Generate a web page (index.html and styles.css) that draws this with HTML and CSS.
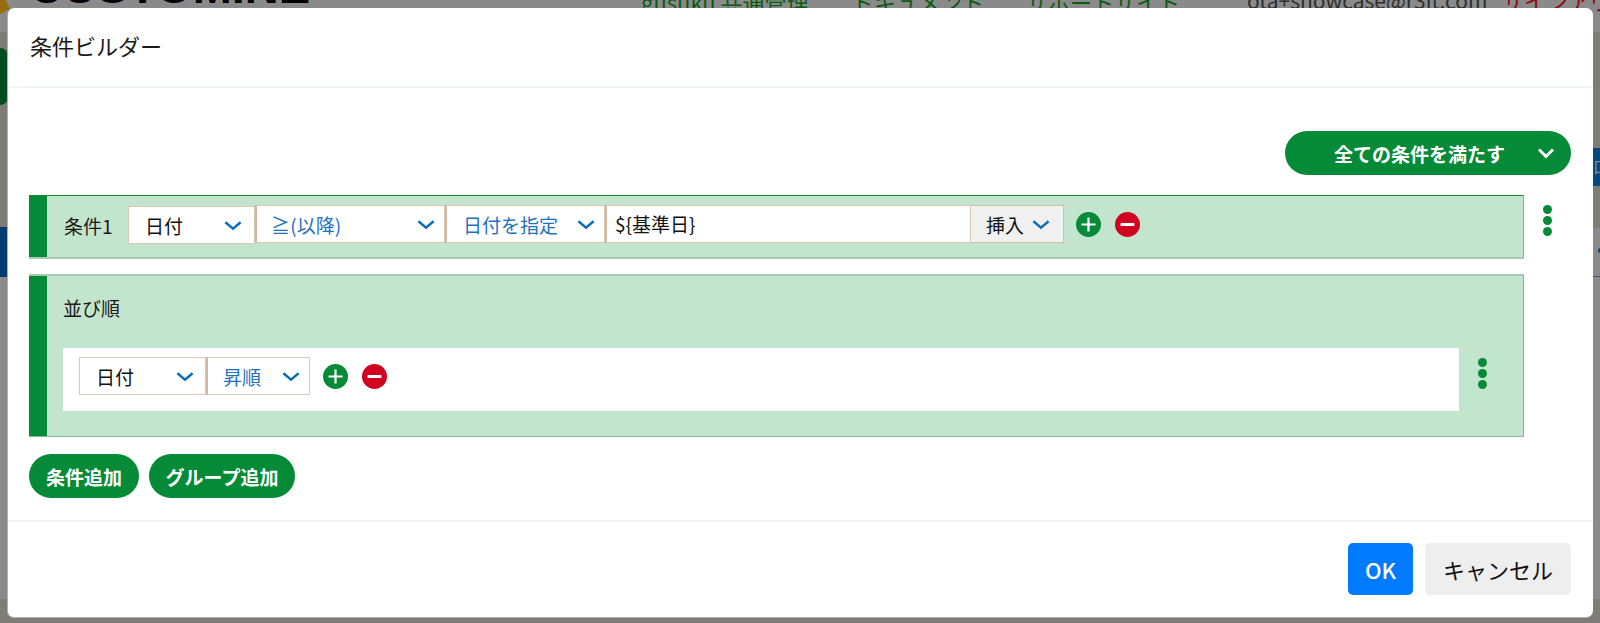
FILE: index.html
```html
<!DOCTYPE html>
<html lang="ja">
<head>
    <meta charset="UTF-8">
    <meta name="viewport" content="width=device-width, initial-scale=1.0">
    <title>条件ビルダー</title>
    <link rel="stylesheet" href="styles.css">
</head>
<body>
    <!-- page behind the dialog, already dimmed -->
    <div class="behind">
        <div class="band band-top"></div>
        <div class="band band-bottom"></div>
        <div class="logo-mark"></div>
        <div class="side-green"></div>
        <div class="side-blue"></div>
        <div class="side-badge">口</div>
        <div class="side-dot"></div>
        <div class="side-line"></div>
        <div class="brand">CUSTOMINE</div>
        <div class="nav">
            <span class="nav-link nav-gusuku">gusuku 共通管理</span>
            <span class="nav-link nav-docs">ドキュメント</span>
            <span class="nav-link nav-support">サポートサイト</span>
            <span class="nav-user">ota+showcase@r3it.com</span>
            <span class="nav-out">サインアウト</span>
        </div>
    </div>

    <div class="modal">
        <div class="modal-header">条件ビルダー</div>

        <div class="modal-body">
            <div class="match-row">
                <div class="match-pill">
                    <span>全ての条件を満たす</span>
                    <svg class="chev-white" viewBox="0 0 18 12"><path d="M2 2.5 9 9.5 16 2.5"/></svg>
                </div>
            </div>

            <div class="cond-line">
                <div class="cond-box cond-single">
                    <span class="cond-label">条件1</span>
                    <div class="sel sel-field sel-first">
                        <span class="sel-text-black">日付</span>
                        <svg class="chev" viewBox="0 0 18 12"><path d="M2 3 9 9 16 3"/></svg>
                    </div>
                    <div class="sel sel-op">
                        <span>≧ (以降)</span>
                        <svg class="chev" viewBox="0 0 18 12"><path d="M2 3 9 9 16 3"/></svg>
                    </div>
                    <div class="sel sel-kind">
                        <span>日付を指定</span>
                        <svg class="chev" viewBox="0 0 18 12"><path d="M2 3 9 9 16 3"/></svg>
                    </div>
                    <div class="value-input">${基準日}</div>
                    <div class="insert-btn">
                        <span>挿入</span>
                        <svg class="chev" viewBox="0 0 18 12"><path d="M2 3 9 9 16 3"/></svg>
                    </div>
                    <svg class="round-btn round-first" viewBox="0 0 25 25"><circle class="fill-green" cx="12.5" cy="12.5" r="12.5"/><path class="mark" d="M5.5 11.4h5.9V5.5h2.2v5.9h5.9v2.2h-5.9v5.9h-2.2v-5.9H5.5z"/></svg>
                    <svg class="round-btn" viewBox="0 0 25 25"><circle class="fill-red" cx="12.5" cy="12.5" r="12.5"/><rect class="mark" x="5.5" y="10.9" width="14" height="3.2" rx="1"/></svg>
                </div>
                <div class="dots dots-outer"><i></i><i></i><i></i></div>
            </div>

            <div class="cond-line">
                <div class="cond-box cond-sort">
                    <div class="sort-title">並び順</div>
                    <div class="sort-line">
                        <div class="sort-panel">
                            <div class="sel sel-sort-field">
                                <span class="sel-text-black">日付</span>
                                <svg class="chev" viewBox="0 0 18 12"><path d="M2 3 9 9 16 3"/></svg>
                            </div>
                            <div class="sel sel-sort-dir">
                                <span>昇順</span>
                                <svg class="chev" viewBox="0 0 18 12"><path d="M2 3 9 9 16 3"/></svg>
                            </div>
                            <svg class="round-btn round-first" viewBox="0 0 25 25"><circle class="fill-green" cx="12.5" cy="12.5" r="12.5"/><path class="mark" d="M5.5 11.4h5.9V5.5h2.2v5.9h5.9v2.2h-5.9v5.9h-2.2v-5.9H5.5z"/></svg>
                            <svg class="round-btn" viewBox="0 0 25 25"><circle class="fill-red" cx="12.5" cy="12.5" r="12.5"/><rect class="mark" x="5.5" y="10.9" width="14" height="3.2" rx="1"/></svg>
                        </div>
                        <div class="dots dots-inner"><i></i><i></i><i></i></div>
                    </div>
                </div>
            </div>

            <div class="add-row">
                <button class="add-btn add-cond">条件追加</button>
                <button class="add-btn add-group">グループ追加</button>
            </div>
        </div>

        <div class="modal-footer">
            <button class="btn-ok">OK</button>
            <button class="btn-cancel">キャンセル</button>
        </div>
    </div>
</body>
</html>
```

FILE: styles.css
```css
html, body {
    margin: 0;
    padding: 0;
    height: 100%;
    overflow: hidden;
    background-color: #8a8a8a;
    font-family: "Noto Sans CJK JP", "Noto Sans", sans-serif;
    color: #1a1a1a;
}
.behind {
    position: absolute;
    inset: 0;
    overflow: hidden;
}
.band {
    position: absolute;
    left: 0;
    right: 0;
    background-color: #7f7c76;
}
.band-top {
    top: 32px;
    height: 196px;
}
.band-bottom {
    top: 599px;
    bottom: 0;
}
.logo-mark {
    position: absolute;
    left: -6px;
    top: -4px;
    width: 13px;
    height: 17px;
    background-color: #96700f;
    transform: rotate(-30deg);
}
.side-green {
    position: absolute;
    left: -10px;
    top: 48px;
    width: 18px;
    height: 57px;
    border-radius: 8px;
    background-color: #004d1e;
}
.side-blue {
    position: absolute;
    left: 0;
    top: 227px;
    width: 8px;
    height: 50px;
    background-color: #003b70;
}
.side-badge {
    position: absolute;
    left: 1590px;
    top: 148px;
    width: 30px;
    height: 38px;
    line-height: 36px;
    font-size: 16px;
    padding-left: 3px;
    box-sizing: border-box;
    color: #8a8a8a;
    background-color: #004a80;
}
.side-dot {
    position: absolute;
    left: 1598px;
    top: 248px;
    width: 5px;
    height: 5px;
    border-radius: 50%;
    background-color: #004a80;
}
.side-line {
    position: absolute;
    left: 1590px;
    right: 0;
    top: 276px;
    height: 1px;
    background-color: #2c5a90;
}
.brand {
    position: absolute;
    left: 29px;
    top: -37px;
    font-family: "Liberation Sans", sans-serif;
    font-size: 47px;
    line-height: 47px;
    font-weight: 700;
    color: #000;
}
.nav {
    font-size: 22px;
    line-height: 22px;
}
.nav span {
    position: absolute;
    top: -11px;
    white-space: nowrap;
}
.nav span.nav-link {
    top: -10px;
    color: #0b5a12;
}
.nav-gusuku { left: 641px; }
.nav-docs { left: 852px; }
.nav-support { left: 1026px; }
.nav-user {
    left: 1247px;
    color: #2e2e2e;
    font-size: 21px;
}
.nav-out {
    left: 1502px;
    color: #8c0a0a;
}

.modal {
    position: absolute;
    left: 7px;
    top: 8px;
    width: 1586px;
    height: 610px;
    box-sizing: border-box;
    display: flex;
    flex-direction: column;
    background-color: #ffffff;
    border-left: 1px solid rgba(0, 0, 0, 0.3);
    border-bottom: 1px solid rgba(0, 0, 0, 0.3);
    border-radius: 7px;
}
.modal-header {
    height: 80px;
    box-sizing: border-box;
    padding: 0 22px 4px;
    display: flex;
    align-items: center;
    font-size: 22px;
    border-bottom: 2px solid #f1f5f5;
}
.modal-body {
    flex-grow: 1;
    padding: 43px 22px 0 21px;
}
.match-row {
    display: flex;
    justify-content: flex-end;
    margin-bottom: 20px;
}
.match-pill {
    width: 286px;
    height: 44px;
    box-sizing: border-box;
    padding: 0 16px 0 49px;
    border-radius: 22px;
    display: flex;
    align-items: center;
    justify-content: space-between;
    background-color: #058a37;
    color: #ffffff;
    font-size: 19px;
    font-weight: 700;
}
.chev-white {
    width: 18px;
    height: 12px;
    fill: none;
    stroke: #ffffff;
    stroke-width: 3;
}
.chev {
    width: 20px;
    height: 13px;
    flex-shrink: 0;
    fill: none;
    stroke: #0a6ebd;
    stroke-width: 2.2;
}
.cond-line {
    display: flex;
    align-items: flex-start;
    margin-bottom: 15px;
}
/* the green bar is painted in the background so the corners stay square */
.cond-box {
    flex-grow: 1;
    box-sizing: border-box;
    background: linear-gradient(to right, #058a37 18px, #c4e5cd 18px);
    background-origin: border-box;
    background-clip: border-box;
    border: 1px solid #7fba94;
    border-left: none;
}
.cond-single {
    height: 64px;
    border-top-color: #1d8a2e;
    border-bottom: 2px solid #a9c9b3;
    padding: 9px 0 0 35px;
    display: flex;
    align-items: flex-start;
}
.cond-label {
    width: 64px;
    line-height: 41px;
    font-size: 19px;
    white-space: nowrap;
}
.sel {
    height: 38px;
    box-sizing: border-box;
    display: flex;
    align-items: center;
    justify-content: space-between;
    background-color: #ffffff;
    border: 1px solid #d9c8b4;
    font-size: 19px;
    color: #1f72bf;
    white-space: nowrap;
}
.sel-text-black {
    color: #111;
}
.sel-first {
    width: 127px;
    margin-top: 1px;
    padding: 0 11px 0 16px;
}
.sel-op {
    width: 190px;
    padding: 0 8px 0 14px;
    border-left: 2px solid #d0b9a0;
    word-spacing: -4px;
}
.sel-kind {
    width: 160px;
    padding: 0 8px 0 16px;
    border-left: 2px solid #d0b9a0;
}
.value-input {
    width: 366px;
    height: 38px;
    box-sizing: border-box;
    padding-left: 8px;
    line-height: 36px;
    font-size: 19px;
    color: #111;
    background-color: #ffffff;
    border: 1px solid #d9c8b4;
    border-left: 2px solid #d0b9a0;
}
.insert-btn {
    width: 93px;
    height: 38px;
    box-sizing: border-box;
    padding: 0 12px 0 15px;
    display: flex;
    align-items: center;
    justify-content: space-between;
    font-size: 19px;
    color: #111;
    background-color: #f0f0f0;
    border: 1px solid #d0c0ac;
    border-left: none;
}
.round-btn {
    width: 25px;
    height: 25px;
    flex-shrink: 0;
    margin-left: 14px;
}
.cond-single .round-btn {
    margin-top: 7px;
}
.cond-single .round-first {
    margin-left: 12px;
}
.round-first {
    margin-left: 13px;
}
.fill-green { fill: #058a37; }
.fill-red { fill: #d0021f; }
.mark { fill: #ffffff; }
.dots {
    display: flex;
    flex-direction: column;
    align-items: center;
    flex-shrink: 0;
    gap: 2px;
}
.dots i {
    width: 9px;
    height: 9px;
    border-radius: 50%;
    background-color: #058a37;
}
.dots-outer {
    width: 47px;
    padding-top: 10px;
}
.dots-inner {
    width: 46px;
    padding-top: 10px;
}
.cond-sort {
    height: 163px;
    margin-right: 47px;
    border-top: 2px solid #a9c9b3;
    padding: 0 18px 0 34px;
}
.sort-title {
    height: 72px;
    line-height: 64px;
    font-size: 19px;
}
.sort-line {
    display: flex;
    align-items: flex-start;
}
.sort-panel {
    flex-grow: 1;
    height: 63px;
    box-sizing: border-box;
    padding: 9px 16px 0;
    display: flex;
    align-items: flex-start;
    background-color: #ffffff;
}
.sort-panel .round-btn {
    margin-top: 7px;
}
.sel-sort-field {
    width: 127px;
    padding: 0 10px 0 16px;
}
.sel-sort-dir {
    width: 104px;
    padding: 0 8px 0 15px;
    border-left: 2px solid #d0b9a0;
}
.add-row {
    display: flex;
    gap: 10px;
    margin-top: 17px;
}
.add-btn {
    height: 44px;
    padding: 0;
    border: none;
    border-radius: 22px;
    background-color: #058a37;
    color: #ffffff;
    font-family: inherit;
    font-size: 19px;
    font-weight: 700;
}
.add-cond { width: 110px; }
.add-group { width: 146px; }
.modal-footer {
    height: 97px;
    box-sizing: border-box;
    padding: 21px 22px 0 0;
    display: flex;
    justify-content: flex-end;
    gap: 12px;
    border-top: 2px solid #f3f3f3;
}
.btn-ok, .btn-cancel {
    height: 52px;
    padding: 0;
    border: none;
    border-radius: 5px;
    font-family: inherit;
    font-size: 22px;
}
.btn-ok {
    width: 65px;
    background-color: #007bff;
    color: #ffffff;
    font-weight: 500;
}
.btn-cancel {
    width: 146px;
    background-color: #eeeeee;
    color: #111;
}
```
